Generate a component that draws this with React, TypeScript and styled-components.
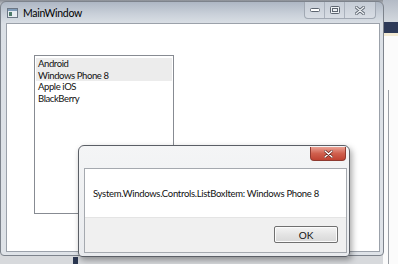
import * as React from 'react'
import styled, { createGlobalStyle } from 'styled-components'

const GlobalStyle = createGlobalStyle`
  html, body {
    margin: 0;
    padding: 0;
    background: #d4d6d9;
  }
  body {
    font-family: 'Segoe UI', Lato, 'Noto Sans', sans-serif;
    color: #111;
  }
`

const Desktop = styled.div`
  position: relative;
  width: 398px;
  height: 264px;
  overflow: hidden;
  background: linear-gradient(#8b8f96 0, #b9bdc3 4px, #d7d9dc 40px);
`

// window peeking out behind the main one, on the right
const BackWindow = styled.div`
  position: absolute;
  left: 383px;
  top: 0;
  width: 40px;
  height: 264px;
  display: flex;
  flex-direction: column;
`

const BackTitle = styled.div`
  height: 22px;
  background: linear-gradient(#b4bbc6, #d3d8de);
`

const BackBand = styled.div`
  height: 11px;
  background: #2d3a58;
  border-bottom: 3px solid #f3ead3;
`

const BackBody = styled.div`
  flex: 1;
  background: #fbfbfb;
  display: flex;
  padding: 54px 0 0 5px;
`

const BackEdge = styled.div`
  width: 1px;
  height: 100%;
  background: #9a9ea4;
`

const TaskbarBit = styled.div`
  position: absolute;
  left: 73px;
  top: 257px;
  width: 5px;
  height: 7px;
  background: #2a3650;
`

const MainWindow = styled.div`
  position: absolute;
  left: 0;
  top: 1px;
  width: 384px;
  height: 255px;
  display: flex;
  flex-direction: column;
  border-radius: 6px 6px 4px 4px;
  border: 1px solid #7d838c;
  box-sizing: border-box;
  background: linear-gradient(#aeb7c4 0, #c9d0d9 12px, #dbe0e6 22px, #dfe3e8 100%);
`

const TitleBar = styled.div`
  height: 21px;
  display: flex;
  align-items: flex-start;
  padding-left: 6px;
`

const AppIcon = styled.svg`
  margin-top: 6px;
  width: 11px;
  height: 10px;
`

const Title = styled.span`
  margin: 3px 0 0 5px;
  font-size: 10.5px;
  letter-spacing: -0.3px;
  line-height: 16px;
  color: #000;
`

const CaptionGroup = styled.div`
  margin-left: auto;
  margin-right: 7px;
  display: flex;
  height: 16px;
  border: 1px solid #a1a8b3;
  border-top: none;
  border-radius: 0 0 4px 4px;
  overflow: hidden;
  background: linear-gradient(#c5ccd6, #d8dde4);
`

const CaptionButton = styled.div<{ wide?: boolean }>`
  width: ${({ wide }) => (wide ? 30 : 19)}px;
  display: flex;
  align-items: center;
  justify-content: center;
  & + & {
    border-left: 1px solid #aab1bc;
  }
`

const Client = styled.div`
  flex: 1;
  margin: 0 3px 3px 5px;
  background: #fff;
  border: 1px solid #9ba1aa;
  display: flex;
  align-items: flex-start;
  padding: 31px 0 0 27px;
`

const ListBox = styled.div`
  width: 140px;
  height: 159px;
  box-sizing: border-box;
  border: 1px solid #878b92;
  padding: 2px 1px;
  display: flex;
  flex-direction: column;
`

const ListItem = styled.div<{ highlighted?: boolean }>`
  height: 11.5px;
  line-height: 11.5px;
  font-size: 9.5px;
  letter-spacing: -0.4px;
  padding-left: 2px;
  background: ${({ highlighted }) => (highlighted ? '#ececec' : 'transparent')};
  white-space: nowrap;
`

const Dialog = styled.div`
  position: absolute;
  left: 78px;
  top: 145px;
  width: 272px;
  height: 112px;
  box-sizing: border-box;
  border: 1px solid #5b5f66;
  border-radius: 6px 6px 4px 4px;
  background: linear-gradient(#f4f5f6, #e9ebee);
  box-shadow: 2px 3px 6px rgba(0, 0, 0, 0.35);
  display: flex;
  flex-direction: column;
`

const DialogTitle = styled.div`
  height: 22px;
  display: flex;
  justify-content: flex-end;
  align-items: flex-start;
  padding-right: 3px;
`

const CloseButton = styled.div`
  width: 34px;
  height: 13px;
  margin-top: 1px;
  border: 1px solid #8e3a30;
  border-top: none;
  border-radius: 0 0 4px 4px;
  background: linear-gradient(#eaa194, #d0604e 50%, #c04332);
  display: flex;
  align-items: center;
  justify-content: center;
`

const DialogClient = styled.div`
  flex: 1;
  margin: 0 2px 3px 5px;
  border: 1px solid #a5a9af;
  background: #fff;
  display: flex;
  flex-direction: column;
`

const Message = styled.div`
  height: 48px;
  display: flex;
  align-items: center;
  padding: 0 0 0 8px;
  font-size: 9.5px;
  letter-spacing: -0.3px;
  white-space: nowrap;
`

const ButtonBar = styled.div`
  flex: 1;
  background: #f0f0f0;
  border-top: 1px solid #e4e4e4;
  display: flex;
  justify-content: flex-end;
  align-items: flex-start;
  padding: 8px 8px 0 0;
`

const OkButton = styled.div`
  width: 64px;
  height: 17px;
  box-sizing: border-box;
  border: 1px solid #707070;
  border-radius: 2px;
  background: linear-gradient(#f4f4f4, #e4e4e4 50%, #d8d8d8);
  box-shadow: inset 0 0 0 1px #fbfbfb;
  display: flex;
  align-items: center;
  justify-content: center;
  font-size: 10px;
`

const platforms = ['Android', 'Windows Phone 8', 'Apple iOS', 'BlackBerry']

const App = () => (
  <>
    <GlobalStyle />
    <Desktop>
      <BackWindow>
        <BackTitle />
        <BackBand />
        <BackBody>
          <BackEdge />
        </BackBody>
      </BackWindow>
      <TaskbarBit />

      <MainWindow>
        <TitleBar>
          <AppIcon viewBox="0 0 11 10">
            <rect x="0.5" y="0.5" width="10" height="9" fill="#e6ebf0" stroke="#6b7684" />
            <rect x="1" y="1" width="9" height="2" fill="#7f9bb8" />
            <rect x="2" y="4" width="3" height="4" fill="#4e7a6a" />
          </AppIcon>
          <Title>MainWindow</Title>
          <CaptionGroup>
            <CaptionButton>
              <svg width="10" height="5" viewBox="0 0 10 5">
                <rect x="0.5" y="0.5" width="9" height="3" rx="1" fill="#fff" stroke="#5d6570" />
              </svg>
            </CaptionButton>
            <CaptionButton>
              <svg width="10" height="8" viewBox="0 0 10 8">
                <rect x="0.5" y="0.5" width="9" height="7" rx="1" fill="#eef1f4" stroke="#5d6570" />
                <rect x="2.5" y="2.5" width="5" height="3" fill="none" stroke="#5d6570" />
              </svg>
            </CaptionButton>
            <CaptionButton wide>
              <svg width="10" height="9" viewBox="0 0 10 9">
                <path d="M1 1 L9 8 M9 1 L1 8" stroke="#5d6570" strokeWidth="3" strokeLinecap="round" />
                <path d="M1 1 L9 8 M9 1 L1 8" stroke="#eef1f4" strokeWidth="1.2" strokeLinecap="round" />
              </svg>
            </CaptionButton>
          </CaptionGroup>
        </TitleBar>
        <Client>
          <ListBox>
            {platforms.map((name, i) => (
              <ListItem key={name} highlighted={i < 2}>
                {name}
              </ListItem>
            ))}
          </ListBox>
        </Client>
      </MainWindow>

      <Dialog>
        <DialogTitle>
          <CloseButton>
            <svg width="9" height="8" viewBox="0 0 9 8">
              <path d="M1 1 L8 7 M8 1 L1 7" stroke="#6e2a22" strokeWidth="2.8" strokeLinecap="round" />
              <path d="M1 1 L8 7 M8 1 L1 7" stroke="#fff" strokeWidth="1.3" strokeLinecap="round" />
            </svg>
          </CloseButton>
        </DialogTitle>
        <DialogClient>
          <Message>System.Windows.Controls.ListBoxItem: Windows Phone 8</Message>
          <ButtonBar>
            <OkButton>OK</OkButton>
          </ButtonBar>
        </DialogClient>
      </Dialog>
    </Desktop>
  </>
)

export default App
